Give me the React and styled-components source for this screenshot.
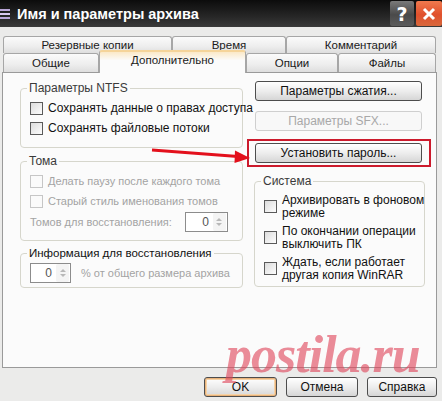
import React from "react";
import styled, { createGlobalStyle } from "styled-components";

const Global = createGlobalStyle`
  html, body { margin: 0; padding: 0; background: #ebebeb; }
  * { box-sizing: border-box; }
`;

const Window = styled.div`
  position: relative;
  width: 442px;
  height: 401px;
  overflow: hidden;
  background: #ebebea;
  font-family: "Liberation Sans", Arial, sans-serif;
  font-size: 11px;
  color: #111;
`;

const TitleBar = styled.div`
  height: 27px;
  display: flex;
  align-items: center;
  background: linear-gradient(#0c0c0c, #262626 60%, #3a3a3a);
`;

const TitleIcon = styled.div`
  width: 16px;
  height: 27px;
  display: flex;
  align-items: center;
`;

const TitleText = styled.div`
  flex: 1;
  color: #fff;
  font-family: "Liberation Sans", Arial, sans-serif;
  font-weight: bold;
  font-size: 14.5px;
  letter-spacing: 0px;
  padding-left: 1px;
`;

const CaptionButton = styled.div`
  width: ${(p) => p.w}px;
  height: 25px;
  margin-left: 2px;
  display: flex;
  align-items: center;
  justify-content: center;
  color: #fff;
  font-family: "DejaVu Sans", sans-serif;
  font-weight: bold;
  font-size: 19px;
  border-radius: 2px;
  background: ${(p) =>
    p.close
      ? "linear-gradient(#f07a4e, #e0502c 55%, #d8683c)"
      : "linear-gradient(#7a7a7a, #4a4a4a 55%, #5c5c5c)"};
`;

const Body = styled.div`
  padding: 9px 5px 0 2px;
`;

const TabRow = styled.div`
  display: flex;
  padding-left: 1px;
  height: ${(p) => p.h}px;
  position: relative;
  z-index: ${(p) => (p.front ? 2 : 1)};
`;

const Tab = styled.div`
  width: ${(p) => p.w}px;
  height: 100%;
  display: flex;
  align-items: center;
  justify-content: center;
  border: 1px solid #a6a6a6;
  border-bottom: none;
  border-radius: 3px 3px 0 0;
  background: linear-gradient(#fbfbfb, #ededed 60%, #dedede);
  color: #1a1a1a;
  font-size: 11.5px;
`;

const ActiveTab = styled(Tab)`
  height: calc(100% + 4px);
  margin-top: -3px;
  background: linear-gradient(#fbe9c8, #fbfbfb 40%);
  border-top: 2px solid #f5d49a;
  padding-bottom: 6px;
`;

const Panel = styled.div`
  height: 296px;
  border: 1px solid #9a9a9a;
  background: #fbfbfb;
  display: grid;
  grid-template-columns: 223px 171px;
  column-gap: 11px;
  padding: 8px 0 0 17px;
  align-items: start;
`;

const Column = styled.div`
  display: flex;
  flex-direction: column;
`;

const Group = styled.fieldset`
  margin: ${(p) => p.mt || 0}px 0 0 0;
  border: 1px solid #d6d6cc;
  border-radius: 4px;
  padding: 3px 8px ${(p) => p.pb || 8}px 9px;
  min-width: 0;
`;

const Legend = styled.legend`
  padding: 0 2px;
  margin-left: -3px;
  font-size: ${(p) => p.size || 12}px;
  color: ${(p) => (p.dark ? "#111" : "#3a3a3a")};
`;

const Row = styled.div`
  display: flex;
  align-items: center;
  height: ${(p) => p.h || 20}px;
  gap: ${(p) => p.gap || 5}px;
  color: ${(p) => (p.disabled ? "#a3a3a3" : "#111")};
  font-size: ${(p) => (p.disabled ? 11 : 12)}px;
  white-space: nowrap;
`;

const Box = styled.span`
  width: 13px;
  height: 13px;
  flex: none;
  border: 1px solid ${(p) => (p.disabled ? "#c6c6c6" : "#5a5a5a")};
  background: ${(p) => (p.disabled ? "#fafafa" : "linear-gradient(135deg, #dcdcdc, #fdfdfd)")};
`;

const Spin = styled.div`
  width: ${(p) => p.w}px;
  height: 20px;
  margin-left: ${(p) => p.ml || 0}px;
  border: 1px solid #8c8c8c;
  background: #fff;
  display: flex;
  align-items: center;
  justify-content: flex-end;
  color: #555;
  font-size: 12px;
`;

const SpinValue = styled.span`
  padding-right: 4px;
`;

const SpinArrows = styled.div`
  width: 13px;
  height: 18px;
  margin-right: 1px;
  display: flex;
  flex-direction: column;
  align-items: center;
  justify-content: center;
  gap: 2px;
  background: #f4f4f4;
  border-radius: 2px;
`;

const Caret = styled.span`
  width: 0;
  height: 0;
  border-left: 3px solid transparent;
  border-right: 3px solid transparent;
  ${(p) => (p.down ? "border-top" : "border-bottom")}: 3px solid #b8b8b8;
`;

const Button = styled.div`
  height: 20px;
  width: ${(p) => p.w || 167}px;
  margin: ${(p) => p.m || "0"};
  display: flex;
  align-items: center;
  justify-content: center;
  border: 1px solid ${(p) => (p.disabled ? "#cfcfcf" : "#4d4d4d")};
  border-radius: 3px;
  background: ${(p) =>
    p.disabled ? "#f8f8f8" : "linear-gradient(#ffffff, #ededed 50%, #d6d6d6)"};
  color: ${(p) => (p.disabled ? "#a8a8a8" : "#111")};
  font-size: 12px;
  box-shadow: ${(p) =>
    p.primary ? "inset 0 0 0 1px #e8b27a, inset 0 0 0 2px #f5d3a8" : "none"};
`;

const Highlight = styled.div`
  margin: 8px 0 0 -7px;
  padding: 2px 8px 2px 6px;
  width: 184px;
  border: 2px solid #cc1a2c;
`;

const SysItem = styled.div`
  display: flex;
  align-items: center;
  gap: 5px;
  height: 31px;
  font-size: 12px;
  line-height: 13px;
  white-space: nowrap;
`;

const Footer = styled.div`
  display: flex;
  justify-content: flex-end;
  gap: 9px;
  padding: 9px 0 0 0;
`;

const Overlay = styled.svg`
  position: absolute;
  left: 0;
  top: 0;
  pointer-events: none;
`;

const Watermark = styled.div`
  position: absolute;
  left: 226px;
  top: 325px;
  font-family: "Liberation Serif", serif;
  font-style: italic;
  font-weight: bold;
  font-size: 52px;
  letter-spacing: -1px;
  color: rgba(222, 70, 90, 0.62);
  pointer-events: none;
`;

const SpinBox = ({ w, ml, value }) => (
  <Spin w={w} ml={ml}>
    <SpinValue>{value}</SpinValue>
    <SpinArrows>
      <Caret />
      <Caret down />
    </SpinArrows>
  </Spin>
);

const Check = ({ children, disabled }) => (
  <Row disabled={disabled}>
    <Box disabled={disabled} />
    {children}
  </Row>
);

export default function App() {
  return (
    <Window>
      <Global />
      <TitleBar>
        <TitleIcon>
          <svg width="12" height="14" viewBox="0 0 12 14">
            <rect x="0" y="2" width="10" height="2" fill="#b9a6d8" />
            <rect x="0" y="6" width="10" height="2" fill="#d7c8ef" />
            <rect x="0" y="10" width="10" height="2" fill="#b9a6d8" />
          </svg>
        </TitleIcon>
        <TitleText>Имя и параметры архива</TitleText>
        <CaptionButton w={24}>?</CaptionButton>
        <CaptionButton w={26} close>
          <svg width="14" height="14" viewBox="0 0 14 14">
            <path d="M2 2L12 12M12 2L2 12" stroke="#fff" strokeWidth="3" />
          </svg>
        </CaptionButton>
      </TitleBar>

      <Body>
        <TabRow h={17}>
          <Tab w={169}>Резервные копии</Tab>
          <Tab w={114}>Время</Tab>
          <Tab w={150}>Комментарий</Tab>
        </TabRow>
        <TabRow h={19} front>
          <Tab w={96}>Общие</Tab>
          <ActiveTab w={147}>Дополнительно</ActiveTab>
          <Tab w={92}>Опции</Tab>
          <Tab w={98}>Файлы</Tab>
        </TabRow>

        <Panel>
          <Column>
            <Group pb={9}>
              <Legend>Параметры NTFS</Legend>
              <Check>Сохранять данные о правах доступа</Check>
              <Check>Сохранять файловые потоки</Check>
            </Group>

            <Group mt={6} pb={7}>
              <Legend>Тома</Legend>
              <Check disabled>Делать паузу после каждого тома</Check>
              <Check disabled>Старый стиль именования томов</Check>
              <Row disabled h={22}>
                Томов для восстановления:
                <SpinBox w={43} ml={8} value="0" />
              </Row>
            </Group>

            <Group mt={6} pb={3}>
              <Legend dark size={11.5}>
                Информация для восстановления
              </Legend>
              <Row disabled h={22} gap={10}>
                <SpinBox w={41} value="0" />% от общего размера архива
              </Row>
            </Group>
          </Column>

          <Column>
            <Button m="0 0 0 1px">Параметры сжатия...</Button>
            <Button disabled m="10px 0 0 1px">
              Параметры SFX...
            </Button>
            <Highlight>
              <Button>Установить пароль...</Button>
            </Highlight>

            <Group mt={7} pb={2}>
              <Legend>Система</Legend>
              <SysItem>
                <Box />
                <span>
                  Архивировать в фоновом
                  <br />
                  режиме
                </span>
              </SysItem>
              <SysItem>
                <Box />
                <span>
                  По окончании операции
                  <br />
                  выключить ПК
                </span>
              </SysItem>
              <SysItem>
                <Box />
                <span>
                  Ждать, если работает
                  <br />
                  другая копия WinRAR
                </span>
              </SysItem>
            </Group>
          </Column>
        </Panel>

        <Footer>
          <Button w={73} primary>
            OK
          </Button>
          <Button w={72}>Отмена</Button>
          <Button w={70}>Справка</Button>
        </Footer>
      </Body>

      <Overlay width="442" height="401">
        <path d="M152 150 L238 156.5" stroke="#e3101c" strokeWidth="3.2" />
        <path d="M250 158 L235 150.5 L234.5 163 Z" fill="#e3101c" />
      </Overlay>
      <Watermark>postila.ru</Watermark>
    </Window>
  );
}
